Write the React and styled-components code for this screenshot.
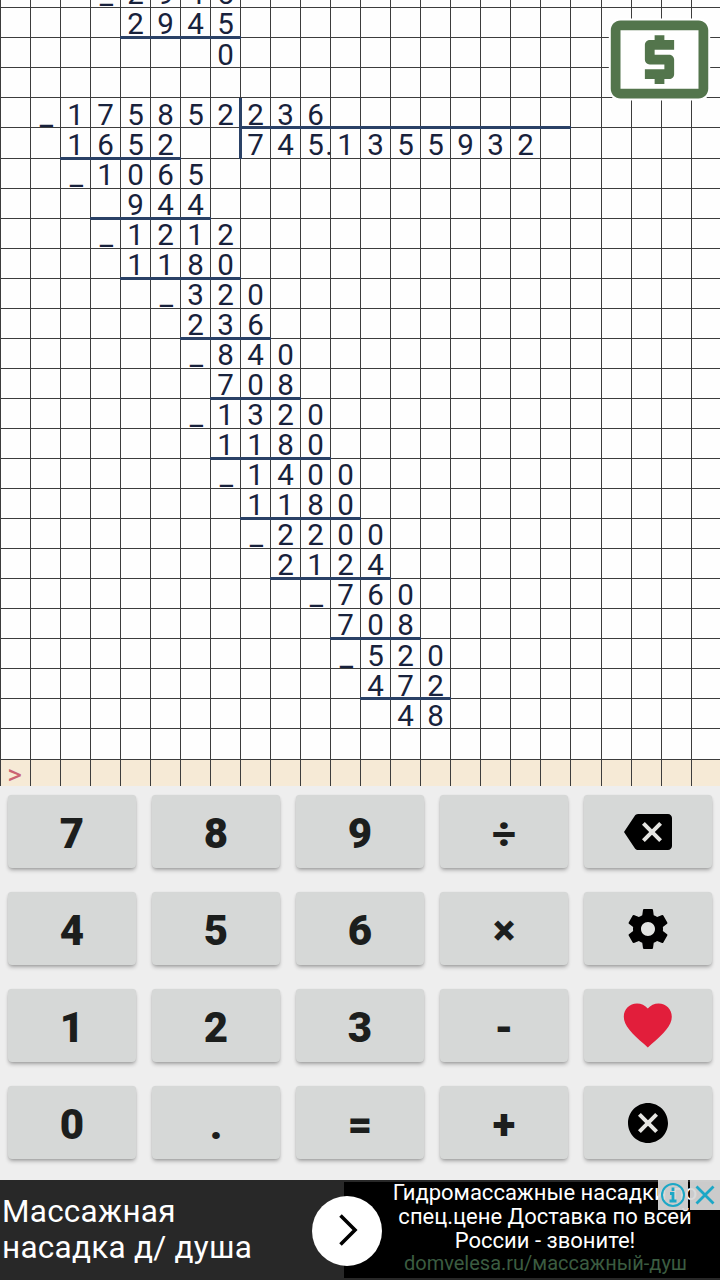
import React from "react";
import styled, { createGlobalStyle } from "styled-components";

const GlobalStyle = createGlobalStyle`
  * { box-sizing: border-box; }
  body { margin: 0; background: #eeeeee; font-family: Roboto, "Liberation Sans", sans-serif; }
`;

const Screen = styled.main`
  position: relative;
  display: flex;
  flex-direction: column;
  width: 720px;
  height: 1280px;
  overflow: hidden;
`;

const Sheet = styled.section`
  display: flex;
  flex-direction: column;
  justify-content: flex-end;
  flex: none;
  height: 786px;
  overflow: hidden;
  background: #fefefe;
`;

const Line = styled.div`
  display: grid;
  flex: none;
  grid-template-columns: repeat(19, 30px) 31px repeat(4, 30px);
  grid-template-rows: 100%;
  height: ${(p) => p.$height}px;
  background: ${(p) => (p.$input ? "#f6ead6" : "transparent")};
`;

const Cell = styled.div`
  position: relative;
  min-height: 0;
  padding-top: ${(p) => (p.$low ? 3 : 2)}px;
  padding-left: ${(p) => (p.$minus ? 2 : 0)}px;
  padding-right: ${(p) => (p.$prompt ? 2 : 0)}px;
  border-left: 1px solid #3d3d3d;
  border-top: 1px solid #3d3d3d;
  color: ${(p) => (p.$prompt ? "#cb6373" : "#18223c")};
  font-size: ${(p) => (p.$prompt ? 28 : 29.5)}px;
  font-weight: 400;
  line-height: ${(p) => (p.$prompt ? 25 : 29)}px;
  text-align: center;
  white-space: nowrap;
`;

const Point = styled.span`
  position: absolute;
  right: -3px;
`;

const Rule = styled.span`
  position: absolute;
  z-index: 1;
  background: #2a4166;
  ${(p) =>
    p.$vertical
      ? "left: -2px; top: 0; width: 3px; bottom: -1px;"
      : "left: -1px; right: -1px; bottom: -2px; height: 3px;"}
`;

const AdsOff = styled.button`
  position: absolute;
  top: 1px;
  right: 2px;
  width: 117px;
  height: 117px;
  padding: 0;
  border: 0;
  background: none;
  svg { display: block; }
`;

const Keypad = styled.section`
  display: grid;
  flex: none;
  grid-template-columns: repeat(5, 128px);
  grid-auto-rows: 73px;
  gap: 24px 16px;
  height: 394px;
  padding: 9px 8px 0;
  background: #eeeeee;
`;

const Key = styled.button`
  display: flex;
  align-items: center;
  justify-content: center;
  padding: 5px 0 0;
  border: 0;
  border-radius: 4px;
  background: #d6d8d7;
  box-shadow: 0 0 1px rgba(0, 0, 0, 0.1), 0 3px 4px -1px rgba(0, 0, 0, 0.3), 0 1px 3px rgba(0, 0, 0, 0.08);
  color: #1c1e1d;
  font: 900 42px/1 Roboto, "Liberation Sans", sans-serif;
`;

const IconKey = styled(Key)`
  padding: 0;
  svg { display: block; flex: none; }
`;

const Banner = styled.section`
  position: relative;
  display: flex;
  flex: none;
  height: 100px;
  padding: 2px 0;
  background: #282828;
  color: #fff;
`;

const Headline = styled.div`
  width: 344px;
  padding: 12px 0 0 2px;
  font-size: 31.5px;
  line-height: 36px;
  letter-spacing: 0.25px;
`;

const Details = styled.div`
  flex: 1;
  padding: 0 0 0 26px;
  background: #000;
  font-size: 22px;
  line-height: 24px;
  text-align: center;
  white-space: nowrap;
`;

const Copy = styled.div`
  margin-top: -1px;
`;

const Url = styled.div`
  padding-left: 1px;
  color: #3b5c40;
  font-size: 20px;
  line-height: 21px;
`;

const Go = styled.span`
  position: absolute;
  left: 312px;
  top: 16px;
  width: 70px;
  height: 70px;
  border-radius: 50%;
  background: #fff;
`;

const AdTools = styled.div`
  position: absolute;
  top: 0;
  right: 0;
  display: flex;
  gap: 2px;
`;

const AdTool = styled.span`
  width: 30px;
  height: 30px;
  background: rgba(216, 216, 216, 0.94);
  svg { display: block; }
`;

/* Each line: column of the first character, its text, optional rule [from, to). */
const lines = [
  { parts: [[3, "_2945"]], h: 30 },
  { parts: [[4, "2945"]], rule: [4, 8], h: 30 },
  { parts: [[7, "0"]], h: 30, low: true },
  { parts: [], h: 30 },
  { parts: [[1, "_175852236"]], rule: [8, 19], bar: 8, h: 30, low: true },
  { parts: [[2, "1652"], [8, "7451355932"]], rule: [2, 6], bar: 8, point: 10, h: 31, low: true },
  { parts: [[2, "_1065"]], h: 30 },
  { parts: [[4, "944"]], rule: [3, 7], h: 30 },
  { parts: [[3, "_1212"]], h: 30 },
  { parts: [[4, "1180"]], rule: [4, 8], h: 30 },
  { parts: [[5, "_320"]], h: 30 },
  { parts: [[6, "236"]], rule: [6, 9], h: 30 },
  { parts: [[6, "_840"]], h: 30 },
  { parts: [[7, "708"]], rule: [7, 10], h: 30 },
  { parts: [[6, "_1320"]], h: 30 },
  { parts: [[7, "1180"]], rule: [7, 11], h: 30 },
  { parts: [[7, "_1400"]], h: 30 },
  { parts: [[8, "1180"]], rule: [8, 12], h: 30 },
  { parts: [[8, "_2200"]], h: 30 },
  { parts: [[9, "2124"]], rule: [9, 13], h: 30 },
  { parts: [[10, "_760"]], h: 30 },
  { parts: [[11, "708"]], rule: [11, 14], h: 30 },
  { parts: [[11, "_520"]], h: 30, low: true },
  { parts: [[12, "472"]], rule: [12, 15], h: 30, low: true },
  { parts: [[13, "48"]], h: 30, low: true },
  { parts: [], h: 31 },
  { parts: [[0, ">"]], h: 27, input: true },
];

const charAt = (line, col) => {
  const part = line.parts.find(([from, text]) => col >= from && col < from + text.length);
  return part ? part[1][col - part[0]] : null;
};

const Icon = ({ size, d, fill = "#000", under, dy = 0 }) => (
  <svg width={size} height={size} viewBox={`0 ${-dy} 24 24`}>
    {under}
    <path fill={fill} d={d} />
  </svg>
);

const MONEY =
  "M11 17h2v-1h1c.55 0 1-.45 1-1v-3c0-.55-.45-1-1-1h-3v-1h4V8h-2V7h-2v1h-1c-.55 0-1 .45-1 1v3c0 .55.45 1 1 1h3v1H9v2h2v1zm9-13H4c-1.11 0-1.99.89-1.99 2L2 18c0 1.11.89 2 2 2h16c1.11 0 2-.89 2-2V6c0-1.11-.89-2-2-2zm0 14H4V6h16v12z";
const BACKSPACE =
  "M22 3H7c-.69 0-1.23.35-1.59.88L0 12l5.41 8.11c.36.53.9.89 1.59.89h15c1.1 0 2-.9 2-2V5c0-1.1-.9-2-2-2zm-3 12.59L17.59 17 14 13.41 10.41 17 9 15.59 12.59 12 9 8.41 10.41 7 14 10.59 17.59 7 19 8.41 15.41 12 19 15.59z";
const GEAR =
  "M19.43 12.98c.04-.32.07-.64.07-.98s-.03-.66-.07-.98l2.11-1.65c.19-.15.24-.42.12-.64l-2-3.46c-.12-.22-.39-.3-.61-.22l-2.49 1c-.52-.4-1.08-.73-1.69-.98l-.38-2.65C14.46 2.18 14.25 2 14 2h-4c-.25 0-.46.18-.49.42l-.38 2.65c-.61.25-1.17.59-1.69.98l-2.49-1c-.23-.09-.49 0-.61.22l-2 3.46c-.13.22-.07.49.12.64l2.11 1.65c-.04.32-.07.65-.07.98s.03.66.07.98l-2.11 1.65c-.19.15-.24.42-.12.64l2 3.46c.12.22.39.3.61.22l2.49-1c.52.4 1.08.73 1.69.98l.38 2.65c.03.24.24.42.49.42h4c.25 0 .46-.18.49-.42l.38-2.65c.61-.25 1.17-.59 1.69-.98l2.49 1c.23.09.49 0 .61-.22l2-3.46c.12-.22.07-.49-.12-.64l-2.11-1.65zM12 15.5c-1.93 0-3.5-1.57-3.5-3.5s1.57-3.5 3.5-3.5 3.5 1.57 3.5 3.5-1.57 3.5-3.5 3.5z";
const HEART =
  "M12 21.35l-1.45-1.32C5.4 15.36 2 12.28 2 8.5 2 5.42 4.42 3 7.5 3c1.74 0 3.41.81 4.5 2.09C13.09 3.81 14.76 3 16.5 3 19.58 3 22 5.42 22 8.5c0 3.78-3.4 6.86-8.55 11.54L12 21.35z";
const CANCEL =
  "M12 2C6.47 2 2 6.47 2 12s4.47 10 10 10 10-4.47 10-10S17.53 2 12 2zm5 13.59L15.59 17 12 13.41 8.41 17 7 15.59 10.59 12 7 8.41 8.41 7 12 10.59 15.59 7 17 8.41 13.41 12 17 15.59z";

const iconKeys = {
  backspace: <Icon size={48} d={BACKSPACE} under={<path fill="#e4e4e1" d="M8 6h12v12H8z" />} />,
  settings: <Icon size={48} d={GEAR} under={<circle cx="12" cy="12" r="4" fill="#e2e4e2" />} />,
  like: <Icon size={57.6} d={HEART} fill="#e21e3b" dy={-0.3} />,
  clear: <Icon size={48} d={CANCEL} under={<circle cx="12" cy="12" r="8" fill="#e4e4e1" />} />,
};

const keys = [
  "7", "8", "9", "÷", "backspace",
  "4", "5", "6", "×", "settings",
  "1", "2", "3", "-", "like",
  "0", ".", "=", "+", "clear",
];

export default function App() {
  return (
    <Screen>
      <GlobalStyle />
      <Sheet>
        {lines.map((line, row) => (
          <Line key={row} $height={line.h} $input={line.input}>
            {Array.from({ length: 24 }, (_, col) => (
              <Cell key={col} $low={line.low} $prompt={line.input} $minus={charAt(line, col) === "_"}>
                {charAt(line, col)}
                {line.point === col && <Point>.</Point>}
                {line.rule && col >= line.rule[0] && col < line.rule[1] && <Rule />}
                {line.bar === col && <Rule $vertical />}
              </Cell>
            ))}
          </Line>
        ))}
      </Sheet>
      <AdsOff aria-label="$">
        <Icon
          size={117}
          d={MONEY}
          fill="#53754c"
          under={<rect x="1.6" y="3.6" width="20.8" height="16.8" rx="2.3" fill="#fff" />}
        />
      </AdsOff>
      <Keypad>
        {keys.map((k) =>
          iconKeys[k] ? (
            <IconKey key={k} aria-label={k}>{iconKeys[k]}</IconKey>
          ) : (
            <Key key={k}>{k}</Key>
          )
        )}
      </Keypad>
      <Banner>
        <Headline>
          Массажная
          <br />
          насадка д/ душа
        </Headline>
        <Details>
          <Copy>
            Гидромассажные насадки по
            <br />
            спец.цене Доставка по всей
            <br />
            России - звоните!
            <Url>domvelesa.ru/массажный-душ</Url>
          </Copy>
        </Details>
        <Go>
          <svg width="70" height="70" viewBox="0 0 70 70">
            <path d="M28.5 19.5 43 34l-14.500 14.500" fill="none" stroke="#000" strokeWidth="3.600" />
          </svg>
        </Go>
        <AdTools>
          <AdTool>
            <svg width="30" height="30" viewBox="0 0 30 30" fill="none" stroke="#1ca7c6">
              <circle cx="15" cy="15" r="11" strokeWidth="2" />
              <path d="M15 7.500v3.500M12 13.500h3V21M11.500 21h7" strokeWidth="2.800" />
            </svg>
          </AdTool>
          <AdTool>
            <svg width="30" height="30" viewBox="0 0 30 30" fill="none" stroke="#1ca7c6">
              <path d="M6.500 6.500l17 17M23.500 6.500l-17 17" strokeWidth="2.800" />
            </svg>
          </AdTool>
        </AdTools>
      </Banner>
    </Screen>
  );
}
